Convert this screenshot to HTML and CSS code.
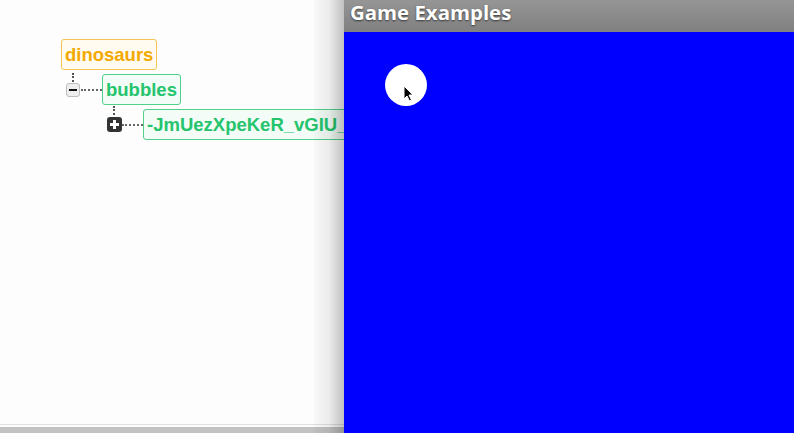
FILE: index.html
```html
<!DOCTYPE html>
<html>
<head>
<meta charset="utf-8">
<link rel="stylesheet" href="styles.css">
</head>
<body>
<div class="app">
  <div class="left">
    <div class="tree">
      <div class="node orange">dinosaurs</div>
      <div class="row row1">
        <span class="toggle minus"></span>
        <span class="link"></span>
        <div class="node green">bubbles</div>
      </div>
      <div class="row row2">
        <span class="toggle plus"></span>
        <span class="link"></span>
        <div class="node green">-JmUezXpeKeR_vGIU_</div>
      </div>
    </div>
    <div class="rule"></div>
    <div class="scrollbar"></div>
    <div class="shade"></div>
  </div>
  <div class="right">
    <div class="header">Game Examples</div>
    <div class="stage">
      <div class="ball"></div>
      <svg class="cursor" width="12" height="18" viewBox="0 0 12 18"><path d="M1 1 L1 14 L4 11 L6.5 16 L8.5 15 L6 10 L10 10 Z" fill="#000" stroke="#fff" stroke-width="1"/></svg>
    </div>
  </div>
</div>
</body>
</html>
```
FILE: styles.css
```css
html, body { margin: 0; padding: 0; }
body { width: 794px; height: 433px; overflow: hidden; font-family: "Liberation Sans", Arial, sans-serif; }
.app { display: flex; width: 794px; height: 433px; }
.left { position: relative; width: 344px; height: 433px; background: #fdfdfd; overflow: hidden; flex: none; }
.tree { padding: 39px 0 0 61px; }
.node { display: inline-block; box-sizing: border-box; height: 31px; padding: 0 3px; font-weight: bold; font-size: 18.5px; line-height: 29px; border: 1px solid; border-radius: 3px; white-space: nowrap; }
.orange { color: #f2a900; border-color: #f3c451; background: #fffbf1; }
.green { color: #25c46d; border-color: #4fd08b; background: #f3fcf7; }
.row { display: flex; align-items: center; white-space: nowrap; }
.row1 { margin: 4px 0 0 5px; }
.row2 { margin: 4px 0 0 46px; position: relative; }
.toggle { position: relative; box-sizing: border-box; flex: none; border-radius: 3px; }
.toggle.minus { width: 14px; height: 14px; background: #eeeeee; border: 1px solid #bdbdbd; }
.toggle.minus::after { content: ""; position: absolute; left: 2px; top: 5px; width: 8px; height: 2px; background: #111; }
.toggle.plus { width: 15px; height: 15px; background: #333; }
.toggle.plus::after { content: ""; position: absolute; left: 3px; top: 6px; width: 9px; height: 3px; background: #fff; }
.toggle.plus::before { content: ""; position: absolute; left: 6px; top: 3px; width: 3px; height: 9px; background: #fff; }
.row1 .toggle::before { content: ""; position: absolute; left: 5px; top: -11px; height: 9px; border-left: 2px dotted #555; }
.row2::before { content: ""; position: absolute; left: 6px; top: -3px; height: 9px; border-left: 2px dotted #555; }
.link { flex: none; height: 0; border-top: 2px dotted #666; }
.row1 .link { width: 21px; margin-left: 1px; }
.row2 .link { width: 21px; }
.rule { position: absolute; left: 0; right: 0; top: 424px; height: 1px; background: #e0e0e0; }
.scrollbar { position: absolute; left: 0; right: 0; top: 427px; height: 6px; background: #c2c2c2; }
.shade { position: absolute; top: 0; bottom: 0; right: 0; width: 30px; background: linear-gradient(to right, rgba(0,0,0,0.02), rgba(0,0,0,0.07) 50%, rgba(0,0,0,0.24)); }
.right { flex: 1; display: flex; flex-direction: column; }
.header { height: 32px; box-sizing: border-box; padding: 0 0 0 6px; background: linear-gradient(#959595, #808080); color: #fff; font-family: "Open Sans", "DejaVu Sans", sans-serif; font-weight: bold; font-size: 20.4px; line-height: 25px; text-shadow: 0 1px 2px rgba(0,0,0,0.6); }
.stage { flex: 1; background: #0000ff; position: relative; }
.ball { position: absolute; left: 41px; top: 32px; width: 42px; height: 42px; border-radius: 50%; background: #fff; }
.cursor { position: absolute; left: 59px; top: 53px; }
```
